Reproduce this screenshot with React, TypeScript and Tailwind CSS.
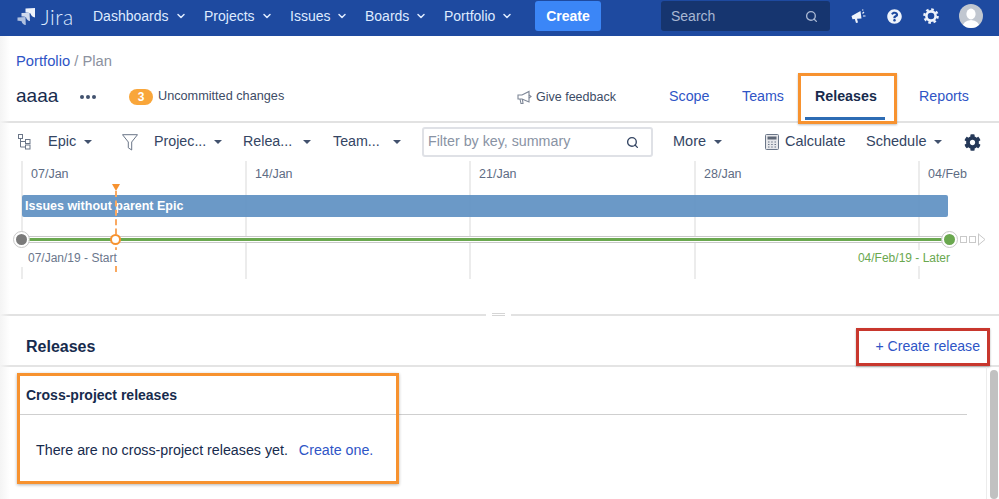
import { ChevronDown, Search } from 'lucide-react'
import { FaCog, FaQuestionCircle } from 'react-icons/fa'

const navItems = [
  { label: 'Dashboards', width: 'w-[111px]' },
  { label: 'Projects', width: 'w-[86px]' },
  { label: 'Issues', width: 'w-[75px]' },
  { label: 'Boards', width: 'w-[79px]' },
  { label: 'Portfolio', width: 'w-[91px]' },
]
const weeks = ['07/Jan', '14/Jan', '21/Jan', '28/Jan', '04/Feb']

function Caret({ className = '' }: { className?: string }) {
  return <span className={`inline-block w-0 h-0 border-x-[4px] border-x-transparent border-t-[4px] border-t-[#42526e] ${className}`} />
}

function NavBar() {
  return (
    <header className="h-[36px] pb-[4px] bg-[#1e4aa0] flex items-center text-[#deebff] shrink-0">
      <div className="w-[93px] pl-[17px] flex items-center gap-[5px]">
        <svg width="19" height="19" viewBox="0 0 19 19" fill="#eef3fb">
          <path d="M8.5 1.5 L18 1 L18 10.5 Q14.5 10 13.5 6.5 Q12 5.5 8.5 5.5 Z" />
          <path d="M4.5 6 L12.5 5.8 L13 14 Q9.8 13.5 9 10.2 Q8 9.4 4.5 9.6 Z" opacity="0.85" />
          <path d="M0.5 10.5 L8.5 10 L8.8 18 Q5.2 17.5 4.6 14.2 Q3 13.6 0.5 13.8 Z" opacity="0.7" />
        </svg>
        <span className="text-[21px] font-light leading-none tracking-[0.5px] font-['Lato','Liberation_Sans',sans-serif]">Jira</span>
      </div>
      <nav className="flex items-center text-[14px] font-medium">
        {navItems.map((item) => (
          <span key={item.label} className={`flex items-center gap-[6px] ${item.width}`}>
            {item.label}
            <ChevronDown size={12} strokeWidth={3} />
          </span>
        ))}
      </nav>
      <button className="w-[66px] h-[30px] rounded-[3px] bg-[#3b86f7] text-white text-[14px] font-bold">Create</button>
      <div className="ml-[60px] w-[169px] h-[30px] rounded-[3px] bg-[#16356f] flex items-center justify-between pl-[10px] pr-[12px] text-[#a9b8d3]">
        <span className="text-[14px] font-medium">Search</span>
        <Search size={13} strokeWidth={2.5} />
      </div>
      <svg className="ml-[21px]" width="15" height="15" viewBox="0 0 15 15" fill="#eef3fb">
        <path d="M0.5 7 L9.5 2 L10.5 9.5 L6 9.7 L7 13.5 L5 14 L3.8 10 L1.5 10.3 Z" />
        <path d="M11.5 4.5 L13 3M12 7 H14.5M11.5 1.5 L12 0.5" stroke="#eef3fb" strokeWidth="1.2" />
      </svg>
      <FaQuestionCircle size={15} className="ml-[21px] text-[#eef3fb]" />
      <svg className="ml-[21px]" width="16" height="16" viewBox="0 0 16 16" fill="none" stroke="#eef3fb">
        <circle cx="8" cy="8" r="4.6" strokeWidth="2.6" />
        <circle cx="8" cy="8" r="6.6" strokeWidth="2.4" strokeDasharray="2.6 2.58" />
      </svg>
      <span className="ml-[20px] w-[24px] h-[24px] rounded-full bg-[#c1c7d0] overflow-hidden flex items-center justify-center">
        <svg width="24" height="24" viewBox="0 0 24 24" fill="#fff">
          <ellipse cx="12" cy="10" rx="4.6" ry="5.4" />
          <path d="M3 24 Q4 16.5 12 16 Q20 16.5 21 24 Z" />
        </svg>
      </span>
    </header>
  )
}

function PageHeader() {
  return (
    <section className="h-[87px] shrink-0 border-b-2 border-[#e2e2e2] pl-[16px] relative">
      <div className="pt-[15px] text-[14.75px] leading-[20px]">
        <span className="text-[#2f55c6]">Portfolio</span>
        <span className="text-[#8c92a0]"> / Plan</span>
      </div>
      <div className="mt-[16px] h-[20px] flex items-center">
        <span className="w-[63px] pb-[2px] text-[19px] font-medium text-[#172b4d]">aaaa</span>
        <span className="w-[49px] flex gap-[2px] ml-[1px]">
          <i className="w-[4px] h-[4px] rounded-full bg-[#42526e]" />
          <i className="w-[4px] h-[4px] rounded-full bg-[#42526e]" />
          <i className="w-[4px] h-[4px] rounded-full bg-[#42526e]" />
        </span>
        <span className="w-[24px] h-[16px] rounded-full bg-[#f9a63a] text-white text-[12px] font-bold flex items-center justify-center">3</span>
        <span className="ml-[5px] w-[359px] text-[12.7px] text-[#3d4c66]">Uncommitted changes</span>
        <svg width="15" height="15" viewBox="0 0 15 15" fill="none" stroke="#7d8696" strokeWidth="1.1">
          <path d="M1 5 H5 L12 1.5 V12 L5 9 H1 Z" />
          <path d="M3 9 L4 13.5 H6 L5.4 9" />
          <path d="M12 5 L14 6.5 L12 8" />
        </svg>
        <span className="ml-[4px] w-[133px] text-[12.5px] text-[#3d4c66]">Give feedback</span>
        <span className="w-[73px] text-[14.25px] text-[#2f55c6]">Scope</span>
        <span className="w-[73px] text-[14.25px] text-[#2f55c6]">Teams</span>
        <span className="w-[104px] relative text-[14.25px] font-bold text-[#172b4d]">
          Releases
          <span className="absolute left-[-17px] top-[-13px] w-[99px] h-[51px] border-[3px] border-[#f7922f] shadow-[0_1px_2px_rgba(0,0,0,0.25)]" />
          <span className="absolute left-[-10px] top-[31px] w-[80px] h-[3px] bg-[#2d6cb4]" />
        </span>
        <span className="text-[14.25px] text-[#2f55c6]">Reports</span>
      </div>
    </section>
  )
}

function Toolbar() {
  return (
    <section className="h-[38px] shrink-0 flex items-center text-[14.5px] text-[#344563]">
      <svg className="ml-[18px]" width="13" height="16" viewBox="0 0 13 16" fill="none" stroke="#6b7688" strokeWidth="1">
        <rect x="0.5" y="0.5" width="4" height="4" />
        <rect x="7.5" y="5.5" width="4.5" height="4" />
        <rect x="7.5" y="11" width="4.5" height="4" />
        <path d="M2.5 4.5 V13 H7.5 M2.5 7.5 H7.5" />
      </svg>
      <span className="ml-[17px] w-[36px]">Epic</span>
      <Caret />
      <svg className="ml-[30px]" width="16" height="17" viewBox="0 0 16 17" fill="none" stroke="#6b7688" strokeWidth="1">
        <path d="M0.5 0.7 H15.5 L9.7 8 V16 L6.3 13.8 V8 Z" />
      </svg>
      <span className="ml-[16px] w-[60px] text-[14.25px]">Projec...</span>
      <Caret />
      <span className="ml-[21px] w-[60px] text-[14.25px]">Relea...</span>
      <Caret />
      <span className="ml-[22px] w-[60px] text-[14.25px]">Team...</span>
      <Caret />
      <div className="ml-[21px] w-[231px] h-[30px] rounded-[3px] border-2 border-[#dfe1e6] flex items-center justify-between pl-[4px] pr-[12px]">
        <span className="text-[14.25px] text-[#8993a4]">Filter by key, summary</span>
        <Search size={13} strokeWidth={2.5} className="text-[#344563]" />
      </div>
      <span className="ml-[20px] w-[41px]">More</span>
      <Caret />
      <svg className="ml-[43px]" width="14" height="16" viewBox="0 0 14 16">
        <rect x="0.5" y="0.5" width="13" height="15" rx="1" fill="#e6e7ea" stroke="#6b7688" />
        <rect x="2.5" y="2.5" width="9" height="3" fill="#5e6776" />
        <path d="M3 8h1.5M6.2 8h1.5M9.5 8h1.5M3 10.5h1.5M6.2 10.5h1.5M9.5 10.5h1.5M3 13h1.5M6.2 13h1.5M9.5 13h1.5" stroke="#6b7688" strokeWidth="1.2" />
      </svg>
      <span className="ml-[6px] w-[81px]">Calculate</span>
      <span className="w-[68px]">Schedule</span>
      <Caret />
      <FaCog size={17} className="ml-[22px] text-[#253858]" />
    </section>
  )
}

function Timeline() {
  return (
    <section className="h-[118px] shrink-0 relative text-[12.5px] text-[#5e6c84]">
      <div className="grid grid-cols-[224px_224px_225px_224px_81px] ml-[21px] h-full">
        {weeks.map((week) => (
          <div key={week} className="border-l-2 border-[#ececec] pl-[8px] pt-[5px] leading-[16px]">{week}</div>
        ))}
      </div>
      {/* bar and track sit over the week columns */}
      <div className="absolute left-[22px] top-[34px] w-[926px] h-[22px] rounded-[2px] bg-[#6394c4]/95 text-white text-[12.5px] font-bold leading-[22px] pl-[3px]">
        Issues without parent Epic
      </div>
      <span className="absolute left-[19px] top-[81px] w-[8px] h-[25px] bg-white" />
      <div className="absolute left-[21px] top-[75px] w-[929px] h-[7px] border-y border-[#c9c9c9] bg-white flex items-center">
        <div className="w-full h-[3px] bg-[#6aa84f]" />
      </div>
      <span className="absolute left-[14px] top-[71px] w-[15px] h-[15px] rounded-full bg-[#7a7a7a] border-[2px] border-white outline outline-1 outline-[#c9c9c9]" />
      <span className="absolute left-[942px] top-[71px] w-[15px] h-[15px] rounded-full bg-[#6aa84f] border-[2px] border-white outline outline-1 outline-[#c9c9c9]" />
      <span className="absolute left-[960px] top-[75px] w-[7px] h-[7px] border border-[#c9c9c9]" />
      <span className="absolute left-[969px] top-[75px] w-[7px] h-[7px] border border-[#c9c9c9]" />
      <svg className="absolute left-[978px] top-[72px]" width="8" height="13" viewBox="0 0 8 13" fill="none" stroke="#c9c9c9">
        <path d="M0.5 0.5 V12.5 M1 1.5 L7 6.5 L1 11.5" />
      </svg>
      <span className="absolute left-[112px] top-[23px] w-0 h-0 border-x-[4px] border-x-transparent border-t-[7px] border-t-[#f7922f]" />
      <span className="absolute left-[115px] top-[30px] h-[81px] border-l-2 border-dashed border-[#f9a860]" />
      <span className="absolute left-[110px] top-[73px] w-[11px] h-[11px] rounded-full bg-white border-2 border-[#f7922f]" />
      <span className="absolute left-[28px] top-[89px] bg-white text-[12px] leading-[16px] text-[#6b778c]">07/Jan/19 - Start</span>
      <span className="absolute right-[49px] top-[89px] bg-white text-[12px] leading-[16px] text-[#6aa84f]">04/Feb/19 - Later</span>
    </section>
  )
}

function Releases() {
  return (
    <section className="flex-1 relative">
      <div className="h-[51px] border-b-2 border-[#e4e4e4] flex items-center justify-between pl-[26px] pr-[19px] pt-[13px]">
        <h2 className="text-[16px] font-bold text-[#172b4d]">Releases</h2>
        <span className="relative text-[14.1px] text-[#2f55c6]">
          + Create release
          <span className="absolute left-[-19px] right-[-10px] top-[-8px] bottom-[-8px] border-[3px] border-[#c8372d] shadow-[0_1px_2px_rgba(0,0,0,0.3)]" />
        </span>
      </div>
      <div className="ml-[19px] mr-[32px] h-[48px] border-b border-[#cfcfcf] pl-[7px] pt-[18px] leading-[20px] text-[14px] font-bold text-[#172b4d]">
        Cross-project releases
      </div>
      <p className="ml-[36px] mt-[25px] text-[14.25px] leading-[20px] text-[#172b4d]">
        There are no cross-project releases yet.<span className="ml-[11px] text-[#2f55c6]">Create one.</span>
      </p>
      <span className="absolute left-[17px] top-[57px] w-[382px] h-[111px] border-[3px] border-[#f7922f] shadow-[0_1px_3px_rgba(0,0,0,0.3)]" />
      <div className="absolute right-0 top-[51px] bottom-0 w-[13px] border-l border-[#ececec] pl-[3px] pt-[3px]">
        <div className="w-[8px] h-full rounded-full bg-[#c1c1c1]" />
      </div>
    </section>
  )
}

export default function App() {
  return (
    <div className="w-[999px] h-[499px] overflow-hidden bg-white flex flex-col relative font-['Liberation_Sans',sans-serif]">
      <NavBar />
      <PageHeader />
      <Toolbar />
      <Timeline />
      <div className="h-[37px] shrink-0 flex items-end">
        <div className="h-[2px] w-[486px] bg-[#e2e2e2]" />
        <div className="w-[25px] flex flex-col items-center gap-[1px]">
          <span className="w-[13px] h-[1px] bg-[#d5d5d5]" />
          <span className="w-[13px] h-[1px] bg-[#d5d5d5]" />
        </div>
        <div className="h-[2px] flex-1 bg-[#e2e2e2]" />
      </div>
      <Releases />
      <div className="absolute left-0 top-[36px] bottom-0 w-[10px] bg-gradient-to-r from-[#f4f4f4] to-transparent" />
    </div>
  )
}
